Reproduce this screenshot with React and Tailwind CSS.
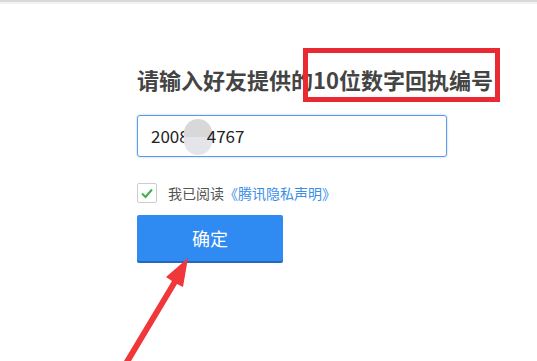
export default function App() {
  return (
    <div className="relative h-[361px] w-[537px] overflow-hidden bg-white" style={{ fontFamily: '"Noto Sans CJK SC", "Liberation Sans", sans-serif' }}>
      <div className="h-[2px] bg-[#d9d9d9]" />
      <div className="h-[2px] bg-[#f2f2f2]" />
      <div className="pl-[137px] pt-[60px]">
        <div className="relative">
          <h1 className="whitespace-nowrap text-[22px] font-bold leading-[30px] text-[#444]">
            请输入好友提供的10位数字回执编号
          </h1>
          <div className="absolute left-[166px] top-[-16px] h-[54px] w-[197px] border-[5px] border-[#ea2a32]" />
        </div>
        <div className="mt-[21px] flex h-[42px] w-[310px] items-center rounded-[3px] border border-[#5b9ae8] pl-[13px] text-[17px] text-[#222] shadow-[0_0_2px_#9cc3f2]">
          <span>2008</span>
          <span className="relative inline-block w-[18px]">
            <span className="absolute left-[-5px] top-[-17px] h-[36px] w-[28px] rounded-full bg-[linear-gradient(#d8d8d8_0%,#d8d8d8_50%,#e3e5ea_50%,#e3e5ea_100%)]" />
          </span>
          <span className="relative">4767</span>
        </div>
        <div className="mt-[26px] flex h-[20px] items-center text-[14px]">
          <span className="flex h-[20px] w-[20px] items-center justify-center rounded-[2px] border border-[#ccc]">
            <svg width="14" height="14" viewBox="0 0 14 14">
              <path d="M2 7.5 L5.5 11 L12 3.5" fill="none" stroke="#3db24b" strokeWidth="2" />
            </svg>
          </span>
          <span className="ml-[11px] text-[#555]">我已阅读</span>
          <span className="text-[#3b8ee8]">《腾讯隐私声明》</span>
        </div>
        <button className="mt-[12px] flex h-[46px] w-[146px] items-center justify-center rounded-[2px] bg-[#2f8bf2] text-[18px] text-white shadow-[0_2px_0_#2468c0]">
          确定
        </button>
      </div>
      <svg className="absolute left-0 top-0" width="537" height="361" viewBox="0 0 537 361">
        <path d="M124 361 L172 281 L166 277 L188 258 L183 287 L177 284 L131 361 Z" fill="#f0383a" />
      </svg>
    </div>
  );
}
